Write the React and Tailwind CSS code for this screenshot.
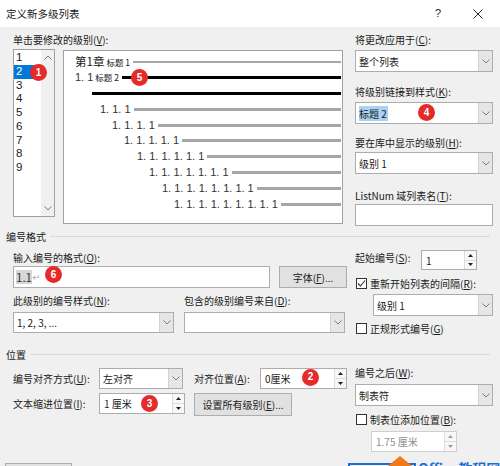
import React from "react";

const F = "font-['Noto_Sans_CJK_SC','Noto_Sans',sans-serif]";

function Acc({ t, k, colon = true }) {
  return (
    <span className="whitespace-nowrap">
      {t}(<span className="underline underline-offset-1">{k}</span>){colon ? ":" : ""}
    </span>
  );
}

function Chevron({ up = false }) {
  return (
    <svg width="8" height="5" viewBox="0 0 8 5">
      <polyline
        points={up ? "0.5,4.5 4,1 7.5,4.5" : "0.5,0.5 4,4 7.5,0.5"}
        fill="none"
        stroke="#7a7a7a"
        strokeWidth="1"
      />
    </svg>
  );
}

function Tri({ up = false, disabled = false }) {
  return (
    <svg width="5" height="3" viewBox="0 0 5 3">
      <polygon points={up ? "2.5,0 5,3 0,3" : "0,0 5,0 2.5,3"} fill={disabled ? "#a0a0a0" : "#222"} />
    </svg>
  );
}

function Badge({ n, className = "" }) {
  return (
    <div
      className={`absolute w-[17px] h-[17px] rounded-full bg-[#e62a2a] text-white text-[10px] font-bold flex items-center justify-center leading-none font-['Liberation_Sans',sans-serif] ${className}`}
    >
      {n}
    </div>
  );
}

function Select({ className = "", children, badge = null }) {
  return (
    <div className={`relative flex border border-[#adadad] bg-white ${className}`}>
      <div className="flex-1 flex items-center pl-[3px] whitespace-nowrap overflow-hidden">{children}</div>
      <div className="w-[14px] shrink-0 bg-[#e6e6e6] border-l border-[#d2d2d2] flex items-center justify-center">
        <Chevron />
      </div>
      {badge}
    </div>
  );
}

function Spin({ className = "", children, disabled = false, badge = null }) {
  return (
    <div
      className={`relative flex border ${disabled ? "border-[#cfcfcf]" : "border-[#adadad]"} bg-white ${className}`}
    >
      <div
        className={`flex-1 flex items-center pl-[4px] whitespace-nowrap ${disabled ? "text-[#8e8e8e]" : ""}`}
      >
        {children}
      </div>
      <div className="w-[12px] shrink-0 flex flex-col border-l border-[#dcdcdc] bg-[#f7f7f7]">
        <div className="flex-1 flex items-center justify-center border-b border-[#dcdcdc]">
          <Tri up disabled={disabled} />
        </div>
        <div className="flex-1 flex items-center justify-center">
          <Tri disabled={disabled} />
        </div>
      </div>
      {badge}
    </div>
  );
}

function Check({ checked = false }) {
  return (
    <div className="w-[11px] h-[11px] shrink-0 border border-[#333] bg-white flex items-center justify-center">
      {checked && (
        <svg width="9" height="9" viewBox="0 0 9 9">
          <polyline points="1,4.5 3.5,7 8,1.5" fill="none" stroke="#333" strokeWidth="1.1" />
        </svg>
      )}
    </div>
  );
}

function NumRow({ pl, n }) {
  const txt = Array(n).fill("1").join(". ");
  return (
    <div className={`h-[15.8px] flex items-center ${pl}`}>
      <span className="font-['Liberation_Sans',sans-serif] text-[11px] text-[#333] whitespace-nowrap leading-none">
        {txt}
      </span>
      <div className="flex-1 h-[3px] bg-[#a6a6a6] ml-[3px]" />
    </div>
  );
}

export default function App() {
  return (
    <div className={`w-[500px] h-[466px] bg-[#f0f0f0] overflow-hidden relative text-[10px] text-[#1a1a1a] ${F}`}>
      {/* title bar */}
      <div className="h-[27px] bg-white flex items-center">
        <span className="ml-[6px] text-[10.5px]">定义新多级列表</span>
        <span className="ml-auto mr-[32px] text-[11px] font-['Liberation_Sans',sans-serif]">?</span>
        <svg className="mr-[17px]" width="10" height="10" viewBox="0 0 10 10">
          <line x1="0.5" y1="0.5" x2="9.5" y2="9.5" stroke="#222" strokeWidth="1" />
          <line x1="9.5" y1="0.5" x2="0.5" y2="9.5" stroke="#222" strokeWidth="1" />
        </svg>
      </div>

      {/* top area */}
      <div className="flex pt-[5px]">
        <div className="ml-[13px] w-[330px]">
          <div className="h-[16px] leading-[16px]">
            <Acc t="单击要修改的级别" k="V" />
          </div>
          <div className="flex items-start">
            {/* level list */}
            <div className="relative mt-[1px] w-[42px] h-[168px] border border-[#a0a0a0] bg-white flex">
              <div className="flex-1 pt-[1px] text-[11.5px] font-['Liberation_Sans',sans-serif]">
                {[1, 2, 3, 4, 5, 6, 7, 8, 9].map((n) => (
                  <div
                    key={n}
                    className={`h-[13.75px] flex items-center leading-none pl-[2px] ${n === 2 ? "bg-[#0078d7] text-white" : ""}`}
                  >
                    {n}
                  </div>
                ))}
              </div>
              <div className="w-[13px] bg-[#f0f0f0] flex flex-col items-center justify-between py-[5px]">
                <Chevron up />
                <Chevron />
              </div>
              <Badge n="1" className="left-[16px] top-[14px]" />
            </div>
            {/* preview */}
            <div className="relative ml-[8px] mt-[2px] w-[280px] h-[174px] border border-[#a0a0a0] bg-white pt-[3px] pr-[1px]">
              <div className="h-[15.8px] flex items-center pl-[11px]">
                <span className="text-[11.5px] leading-none">第1章</span>
                <span className="text-[8.5px] ml-[2px] leading-none">标题 1</span>
                <div className="flex-1 h-[2.5px] bg-[#a6a6a6] ml-[3px]" />
              </div>
              <div className="h-[15.8px] flex items-center pl-[11px]">
                <span className="font-['Liberation_Sans',sans-serif] text-[11px] text-[#333] leading-none">1. 1</span>
                <span className="text-[8.5px] ml-[2px] leading-none">标题 2</span>
                <div className="flex-1 h-[3px] bg-black ml-[3px]" />
              </div>
              <div className="h-[15.8px] flex items-center pl-[28px]">
                <div className="flex-1 h-[3px] bg-black" />
              </div>
              <NumRow pl="pl-[36px]" n={3} />
              <NumRow pl="pl-[48px]" n={4} />
              <NumRow pl="pl-[60px]" n={5} />
              <NumRow pl="pl-[73px]" n={6} />
              <NumRow pl="pl-[85px]" n={7} />
              <NumRow pl="pl-[98px]" n={8} />
              <NumRow pl="pl-[110px]" n={9} />
              <Badge n="5" className="left-[67px] top-[18px]" />
            </div>
          </div>
        </div>

        <div className="ml-[12px] w-[138px] flex flex-col">
          <div className="h-[16px] leading-[16px]">
            <Acc t="将更改应用于" k="C" />
          </div>
          <Select className="mt-[2px] h-[22px]">整个列表</Select>
          <div className="mt-[12px] h-[16px] leading-[16px]">
            <Acc t="将级别链接到样式" k="K" />
          </div>
          <Select className="mt-[2px] h-[22px]" badge={<Badge n="4" className="left-[62px] top-[1px]" />}>
            <span className="bg-[#a9d2f5] pr-[1px]">标题 2</span>
          </Select>
          <div className="mt-[11px] h-[16px] leading-[16px]">
            <Acc t="要在库中显示的级别" k="H" />
          </div>
          <Select className="mt-[1px] h-[22px]">级别 1</Select>
          <div className="mt-[14px] h-[16px] leading-[16px]">
            <Acc t="ListNum 域列表名" k="T" />
          </div>
          <div className="h-[22px] border border-[#adadad] bg-white" />
        </div>
      </div>

      {/* 编号格式 header */}
      <div className="mt-[2px] h-[16px] flex items-center pl-[6px]">
        <span>编号格式</span>
        <div className="flex-1 h-px bg-[#dadada] ml-[4px] mr-[10px]" />
      </div>

      {/* 编号格式 body */}
      <div className="flex">
        <div className="ml-[13px] w-[334px]">
          <div className="mt-[6px] h-[16px] leading-[16px]">
            <Acc t="输入编号的格式" k="O" />
          </div>
          <div className="flex h-[22px]">
            <div className="relative w-[257px] border border-[#adadad] bg-white flex items-center pl-[2px] text-[11.5px]">
              <span className="bg-[#d6d6d6] text-[#333] leading-[14px]">1.1</span>
              <span className="text-[#b0b0b0] text-[10px] font-['DejaVu_Sans',sans-serif]">↵</span>
              <Badge n="6" className="left-[31px] top-[-1px]" />
            </div>
            <div className="ml-[9px] w-[68px] border border-[#adadad] bg-[#e1e1e1] flex items-center justify-center">
              <Acc t="字体" k="F" colon={false} />
              ...
            </div>
          </div>
          <div className="flex mt-[5px]">
            <div className="w-[161px]">
              <div className="h-[16px] leading-[16px]">
                <Acc t="此级别的编号样式" k="N" />
              </div>
              <Select className="mt-[3px] h-[21px]">1, 2, 3, ...</Select>
            </div>
            <div className="ml-[10px] w-[161px]">
              <div className="h-[16px] leading-[16px]">
                <Acc t="包含的级别编号来自" k="D" />
              </div>
              <Select className="mt-[3px] h-[21px]"></Select>
            </div>
          </div>
        </div>

        <div className="ml-[8px] w-[138px]">
          <div className="mt-[6px] h-[20px] flex items-center">
            <span className="w-[66px] pb-[5px]">
              <Acc t="起始编号" k="S" />
            </span>
            <Spin className="w-[56px] h-[20px]">1</Spin>
          </div>
          <div className="mt-[5px] h-[16px] flex items-center">
            <div className="ml-[1px]">
              <Check checked />
            </div>
            <span className="ml-[3px]">
              <Acc t="重新开始列表的间隔" k="R" />
            </span>
          </div>
          <Select className="mt-[3px] ml-[18px] h-[22px]">级别 1</Select>
          <div className="mt-[4px] h-[16px] flex items-center">
            <div className="ml-[1px]">
              <Check />
            </div>
            <span className="ml-[3px]">
              <Acc t="正规形式编号" k="G" colon={false} />
            </span>
          </div>
        </div>
      </div>

      {/* 位置 header */}
      <div className="mt-[10px] h-[16px] flex items-center pl-[6px]">
        <span>位置</span>
        <div className="flex-1 h-px bg-[#dadada] ml-[4px] mr-[10px]" />
      </div>

      {/* 位置 body */}
      <div className="flex">
        <div className="ml-[13px] w-[334px]">
          <div className="mt-[5px] h-[22px] flex items-center">
            <span className="w-[86px]">
              <Acc t="编号对齐方式" k="U" />
            </span>
            <Select className="w-[84px] h-[21px]">左对齐</Select>
            <span className="ml-[11px] w-[66px]">
              <Acc t="对齐位置" k="A" />
            </span>
            <Spin className="w-[87px] h-[21px]" badge={<Badge n="2" className="left-[41px] top-[0px]" />}>
              0厘米
            </Spin>
          </div>
          <div className="mt-[4px] flex items-start">
            <span className="w-[86px] h-[21px] flex items-center">
              <Acc t="文本缩进位置" k="I" />
            </span>
            <Spin className="w-[86px] h-[21px]" badge={<Badge n="3" className="left-[41px] top-[1px]" />}>
              1 厘米
            </Spin>
            <div className="ml-[9px] w-[98px] h-[23px] border border-[#adadad] bg-[#e1e1e1] flex items-center justify-center">
              <Acc t="设置所有级别" k="E" colon={false} />
              ...
            </div>
          </div>
        </div>

        <div className="ml-[8px] w-[138px]">
          <div className="mt-[3px] h-[16px] leading-[16px]">
            <Acc t="编号之后" k="W" />
          </div>
          <Select className="mt-[3px] h-[22px]">制表符</Select>
          <div className="mt-[5px] h-[16px] flex items-center">
            <div className="ml-[1px]">
              <Check />
            </div>
            <span className="ml-[3px]">
              <Acc t="制表位添加位置" k="B" />
            </span>
          </div>
          <Spin disabled className="mt-[4px] ml-[16px] w-[86px] h-[21px]">
            1.75 厘米
          </Spin>
        </div>
      </div>

      {/* bottom button edge */}
      <div className="mt-[11px] ml-[5px] w-[67px] h-[20px] border border-[#adadad] bg-[#e1e1e1]" />

      {/* watermark overlay */}
      <div className="absolute left-[348px] top-[463px] w-[68px] h-[6px] border-t-2 border-x-2 border-[#1f6fd1]" />
      <svg className="absolute left-[388px] top-[456px]" width="24" height="10" viewBox="0 0 24 10">
        <polygon points="12,0 24,10 0,10" fill="#f07a1a" />
      </svg>
      <div className="absolute left-[418px] top-[461px] text-[14px] font-bold text-[#1f6fd1] whitespace-nowrap leading-none">
        Office教程网
      </div>
    </div>
  );
}
